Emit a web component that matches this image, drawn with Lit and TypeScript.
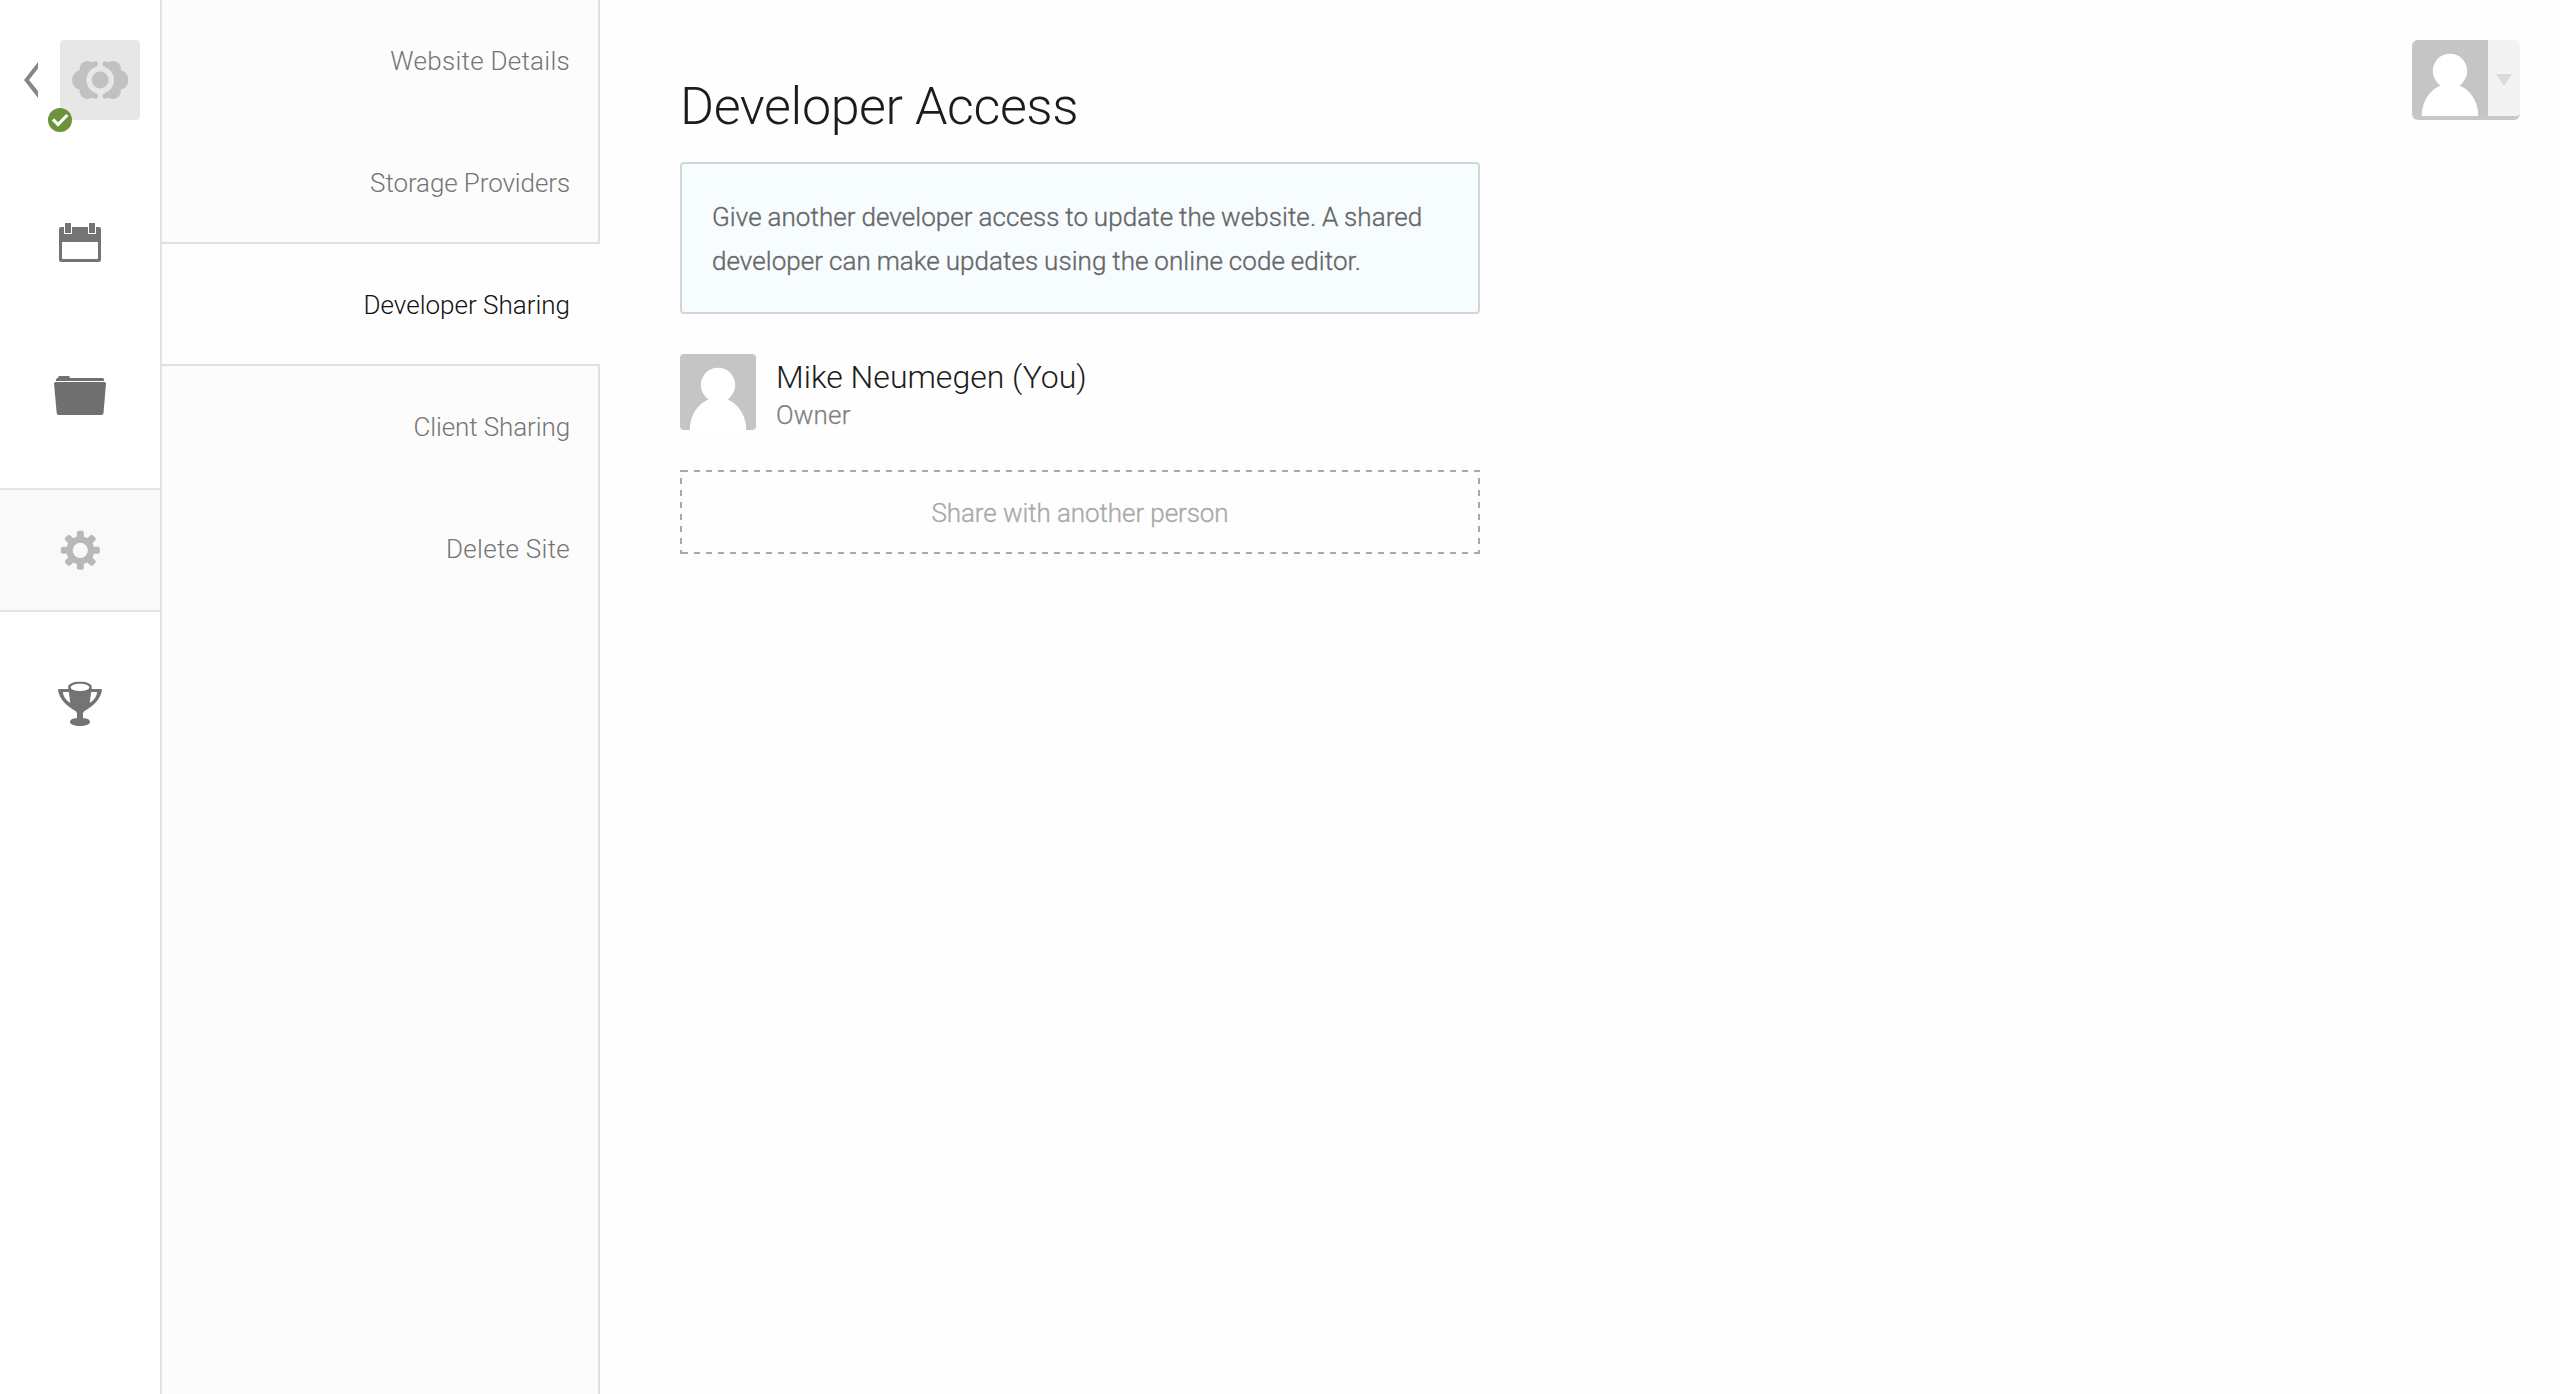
import { LitElement, html, css, svg } from "lit";
import { customElement } from "lit/decorators.js";
import { classMap } from "lit/directives/class-map.js";

const person = html`<svg class="person" width="76" height="76" viewBox="0 0 76 76">
  <rect width="76" height="76" fill="#c5c5c5" />
  <circle cx="38" cy="31" r="17.2" fill="#fff" />
  <ellipse cx="38" cy="76" rx="28.3" ry="32.5" fill="#fff" />
</svg>`;

const calendar = html`<svg width="42" height="42" viewBox="0 0 42 42">
  <path fill="#747474" fill-rule="evenodd" d="M2 4H40a2 2 0 0 1 2 2V37a2 2 0 0 1-2 2H2a2 2 0 0 1-2-2V6a2 2 0 0 1 2-2ZM3 19V35a1 1 0 0 0 1 1H38a1 1 0 0 0 1-1V19Z" />
  <path fill="#fff" d="M5 3h8v8H5zM29 3h8v8h-8z" />
  <path fill="#747474" d="M6 0h6v10H6zM30 0h6v10h-6z" />
</svg>`;

const folder = html`<svg width="52" height="44" viewBox="0 0 52 44">
  <path fill="#707070" d="M2 6V4.500Q2 3 4 3Q4 1 5.500 1H14.500Q16 1 16 3H48.500Q50 3 50 4.500V6Z" />
  <path fill="#707070" d="M1.500 7H50.500Q52 7 52 8.500L49.500 38Q49.300 40 47.500 40H4.500Q2.900 40 2.700 38L0 8.500Q0 7 1.500 7Z" />
</svg>`;

const gear = html`<svg width="40" height="40" viewBox="-20.300 -20.300 40 40">
  <g fill="#b8b8b8">
    ${[0, 45, 90, 135].map(
      (a) => svg`<rect x="-3.500" y="-19.500" width="7" height="39" rx="2" transform="rotate(${a})" />`,
    )}
    <circle r="14" />
  </g>
  <circle r="7.600" fill="#f9f9f9" />
</svg>`;

const trophy = html`<svg width="44" height="46" viewBox="58 680 44 46">
  <path fill="#747474" fill-rule="evenodd" d="M68.200 689V687C68.200 683.800 73 681.800 80 681.800S91.800 683.800 91.800 687V689H100.500Q102.500 689 101.800 691.500C99.500 700.500 92.500 706.500 84.500 711Q83 712 83 713.500V718C87.500 718.300 90 719.800 90 721.800C90 724.300 86 726 80 726S70 724.300 70 721.800C70 719.800 72.500 718.300 77 718V713.500Q77 712 75.500 711C67.500 706.500 60.500 700.500 58.200 691.500Q57.500 689 59.500 689ZM63 692C63.200 696.500 66 700 70.300 703L68.800 692ZM97 692C96.800 696.500 94 700 89.700 703L91.200 692Z" />
  <ellipse cx="80" cy="687.400" rx="9.300" ry="3.600" fill="#fff" />
</svg>`;

const siteLogo = html`<svg width="80" height="80" viewBox="60 40 80 80">
  <g fill="#c1c1c1">
    ${[1, -1].map(
      (s) => svg`<g transform="translate(100.200 80) scale(${s} 1)">
        <circle cx="-18" cy="0" r="10.200" />
        <circle cx="-12.600" cy="-11" r="8.100" />
        <circle cx="-12.600" cy="11" r="8.100" />
        <circle cx="-5" cy="-16" r="2.700" />
        <circle cx="-5" cy="16" r="2.700" />
        <path d="M-20-9L-9.500-18L-5-17.500V-13.500L-10 0L-5 13.500V17.500L-9.500 18L-20 9Z" />
      </g>`,
    )}
  </g>
  <circle cx="100.200" cy="80" r="13.800" fill="#e7e7e7" />
  <circle cx="100.200" cy="80" r="8.400" fill="#c1c1c1" />
</svg>`;

@customElement("app-root")
export class AppRoot extends LitElement {
  private rail = [
    { name: "Calendar", icon: calendar, active: false },
    { name: "Files", icon: folder, active: false },
    { name: "Settings", icon: gear, active: true },
    { name: "Goals", icon: trophy, active: false },
  ];

  private sections = [
    { label: "Website Details", loose: true },
    { label: "Storage Providers", edge: true },
    { label: "Developer Sharing", active: true, edge: true },
    { label: "Client Sharing" },
    { label: "Delete Site", loose: true },
  ];

  static styles = css`
    :host {
      display: block;
      font-family: Roboto, "Liberation Sans", sans-serif;
      font-weight: 300;
      color: #1c1c1c;
    }
    * {
      box-sizing: border-box;
    }
    svg {
      display: block;
    }
    .page {
      display: grid;
      grid-template-columns: 162px 438px 1fr;
      height: 1394px;
      background: #fefefe;
      overflow: hidden;
    }
    .rail {
      background: #fff;
      border-right: 2px solid #e2e2e2;
    }
    .site {
      display: flex;
      align-items: center;
      gap: 22px;
      height: 182px;
      padding: 40px 20px 62px 24px;
    }
    .tile {
      position: relative;
      width: 80px;
      height: 80px;
      border-radius: 4px;
      background: #e7e7e7;
    }
    .badge {
      position: absolute;
      left: -12px;
      top: 68px;
    }
    .tab {
      display: flex;
      align-items: center;
      justify-content: center;
      height: 124px;
      margin-bottom: 29px;
      border-top: 2px solid transparent;
      border-bottom: 2px solid transparent;
    }
    .tab.active {
      background: #f9f9f9;
      border-color: #e4e4e4;
    }
    .sections {
      display: flex;
      flex-direction: column;
    }
    .section {
      display: flex;
      align-items: center;
      justify-content: flex-end;
      height: 122px;
      padding: 0 28px 0 0;
      font-size: 26px;
      letter-spacing: -0.1px;
      color: #757575;
      background: #fcfcfc;
      border-right: 2px solid #e0e0e0;
    }
    .section.loose {
      letter-spacing: 0.27px;
    }
    .section.edge {
      box-shadow: inset 0 -2px #e0e0e0;
    }
    .section.active {
      padding-right: 30px;
      background: #fefefe;
      border-right: none;
      letter-spacing: 0;
      color: #111;
    }
    .rest {
      flex: 1;
      background: #fcfcfc;
      border-right: 2px solid #e0e0e0;
    }
    .content {
      display: flex;
      justify-content: space-between;
      align-items: flex-start;
      padding: 40px 40px 0 80px;
    }
    .main {
      width: 800px;
      padding-top: 33px;
    }
    h1 {
      margin: 0 0 21px;
      font-size: 52px;
      line-height: 68px;
      font-weight: 300;
      letter-spacing: -0.4px;
    }
    .note {
      height: 152px;
      margin: 0 0 40px;
      padding: 31px 30px 29px;
      border: 2px solid #d2d6d8;
      border-radius: 4px;
      background: #f7fcff;
      font-size: 26px;
      line-height: 44px;
      letter-spacing: 0.07px;
      word-spacing: -0.6px;
      color: #666;
      -webkit-text-stroke: 0.35px #666;
      white-space: nowrap;
    }
    .member {
      display: flex;
      gap: 20px;
      height: 76px;
      margin-bottom: 40px;
    }
    .member .person {
      border-radius: 4px;
    }
    .name {
      padding-top: 1px;
      font-size: 32px;
      line-height: 44px;
    }
    .role {
      font-size: 26px;
      line-height: 32px;
      letter-spacing: 0.2px;
      color: #808080;
      -webkit-text-stroke: 0.25px #808080;
    }
    .share {
      --dash: #a8a8a8;
      display: flex;
      align-items: center;
      justify-content: center;
      height: 84px;
      padding-top: 2px;
      background:
        linear-gradient(90deg, var(--dash) 50%, transparent 50%) 2px 0 / 12px 2px repeat-x,
        linear-gradient(90deg, var(--dash) 50%, transparent 50%) 2px 100% / 12px 2px repeat-x,
        linear-gradient(var(--dash) 50%, transparent 50%) 0 8px / 2px 12px repeat-y,
        linear-gradient(var(--dash) 50%, transparent 50%) 100% 8px / 2px 12px repeat-y;
      font-size: 26px;
      letter-spacing: -0.08px;
      color: #a9a9a9;
      -webkit-text-stroke: 0.35px #a9a9a9;
    }
    .account {
      display: flex;
      width: 108px;
      height: 80px;
      border-bottom: 4px solid #c8c8c8;
      border-radius: 6px;
      overflow: hidden;
      background: #f3f3f3;
    }
    .caret {
      display: flex;
      flex: 1;
      align-items: center;
      justify-content: center;
      padding-top: 4px;
    }
  `;

  render() {
    return html`<div class="page">
      <nav class="rail">
        <div class="site">
          <svg width="14" height="36" viewBox="0 0 14 36">
            <path fill="#868686" d="M14 0V6.500L5 18L14 29V36L0 18Z" />
          </svg>
          <div class="tile">
            ${siteLogo}
            <svg class="badge" width="24" height="24" viewBox="0 0 24 24">
              <circle cx="12" cy="12" r="12" fill="#6c933b" />
              <path d="M5 11.300L10 16.500L19.300 7" fill="none" stroke="#fff" stroke-width="3.200" />
            </svg>
          </div>
        </div>
        ${this.rail.map(
          (t) => html`<div class=${classMap({ tab: true, active: t.active })}>${t.icon}</div>`,
        )}
      </nav>
      <nav class="sections">
        ${this.sections.map(
          (s) => html`<div
            class=${classMap({ section: true, active: !!s.active, edge: !!s.edge, loose: !!s.loose })}
          >
            <span>${s.label}</span>
          </div>`,
        )}
        <div class="rest"></div>
      </nav>
      <div class="content">
        <main class="main">
          <h1>Developer Access</h1>
          <p class="note">
            Give another developer access to update the website. A shared<br />developer can make
            updates using the online code editor.
          </p>
          <div class="member">
            ${person}
            <div>
              <div class="name">Mike Neumegen (You)</div>
              <div class="role">Owner</div>
            </div>
          </div>
          <div class="share"><span>Share with another person</span></div>
        </main>
        <div class="account">
          ${person}
          <div class="caret">
            <svg width="16" height="12" viewBox="0 0 16 12"><path fill="#dcdcdc" d="M0 0H16L8 12Z" /></svg>
          </div>
        </div>
      </div>
    </div>`;
  }
}
